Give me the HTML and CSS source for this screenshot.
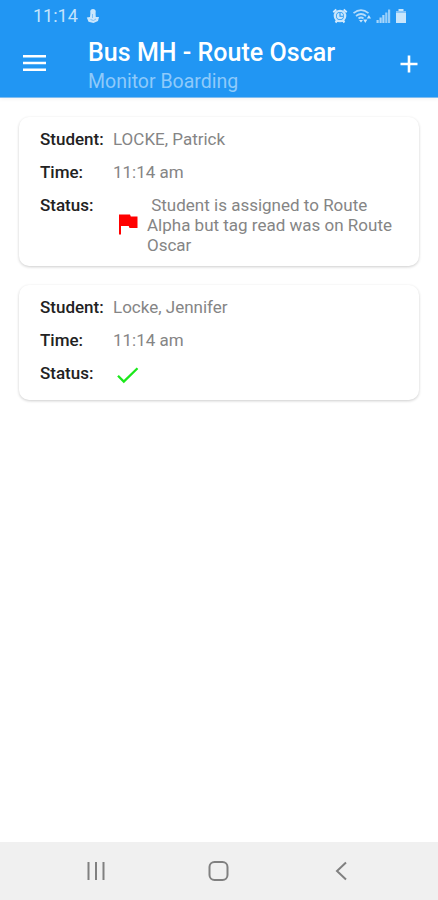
FILE: index.html
```
<!DOCTYPE html>
<html lang="en">
<head>
  <meta charset="utf-8">
  <title>Monitor Boarding</title>
  <meta name="viewport" content="width=device-width, initial-scale=1.0">
  <link rel="stylesheet" href="styles.css">
</head>
<body>
  <header class="header">
    <!-- Status bar -->
    <div class="status-bar">
      <span class="clock">11:14</span>
      <svg class="notice" width="14" height="16" viewBox="0 0 14 16">
        <circle cx="7" cy="3.6" r="2.7"/>
        <path d="M4.500 4.500h5l.3 4.500H13l-1 4-4.500 2-5-1.300L.8 9.500 4 9z"/>
        <path class="notice-cut" d="M6.500 6v4M4.500 11.500l3 1 2.500-1.500"/>
      </svg>
      <div class="status-icons">
        <svg width="16" height="16" viewBox="0 0 16 16">
          <circle cx="8" cy="8" r="6.300"/>
          <path d="M1.300 4.200l3-2.600M14.700 4.200l-3-2.600M3.500 14.500l1.800-2M12.500 14.500l-1.800-2" stroke="#d3eafd" stroke-width="2"/>
          <circle cx="8" cy="8" r="3.900" fill="#2196f3"/>
          <circle cx="8" cy="8" r="3.200"/>
          <path d="M8 5v3.200h3" fill="none" stroke="#2196f3" stroke-width="1.100"/>
        </svg>
        <svg width="20" height="16" viewBox="0 0 20 16">
          <path d="M1.500 5.200q7.500-6 15 0M4 8q5-4 10 0M6.500 10.500q2.500-2 5 0" fill="none" stroke="#b5dcfb" stroke-width="1.700"/>
          <path d="M7 12h4l-2 2.500zM11.200 11.500h4.200l-2.100 3.500zM14.800 10.500h4.200l-2.100-3.500z"/>
        </svg>
        <svg width="15" height="16" viewBox="0 0 15 16">
          <path d="M.5 12h2.200v3H.5zM3.500 9.500h2.200V15H3.500zM6.300 7h2.200v8H6.300z" opacity=".8"/>
          <path d="M9.200 4.500h2.200V15H9.200zM12 1.500h2.200V15H12z" opacity=".7"/>
        </svg>
        <svg width="12" height="16" viewBox="0 0 12 16">
          <path d="M3.500 1h5v2H11v12H1V3h2.500z"/>
          <path d="M1 3h10v2H1z" fill="#87c5f9"/>
        </svg>
      </div>
    </div>

    <!-- App bar -->
    <div class="app-bar">
      <svg class="menu" width="24" height="18" viewBox="0 0 24 18">
        <path d="M0 1h23v2.600H0zM0 7.700h23v2.600H0zM0 14.400h23V17H0z" fill="#fff"/>
      </svg>
      <div class="titles">
        <h1>Bus MH - Route Oscar</h1>
        <p>Monitor Boarding</p>
      </div>
      <svg class="add" width="18" height="18" viewBox="0 0 18 18">
        <path d="M9 .500v17M.500 9h17" stroke="#fff" stroke-width="2.600"/>
      </svg>
    </div>
  </header>

  <main class="list">
    <section class="card">
      <div class="row">
        <span class="label">Student:</span>
        <span class="value">LOCKE, Patrick</span>
      </div>
      <div class="row">
        <span class="label">Time:</span>
        <span class="value">11:14 am</span>
      </div>
      <div class="row">
        <span class="label">Status:</span>
        <div class="value status">
          <svg class="flag" width="19" height="21" viewBox="0 0 19 21">
            <path d="M0 .500h11l.8 2H18.500V14H10.500l-.800-2H2v8.500H0z" fill="#f00"/>
          </svg>
          <p class="message">&nbsp;Student is assigned to Route<br>Alpha but tag read was on Route<br>Oscar</p>
        </div>
      </div>
    </section>

    <section class="card">
      <div class="row">
        <span class="label">Student:</span>
        <span class="value">Locke, Jennifer</span>
      </div>
      <div class="row">
        <span class="label">Time:</span>
        <span class="value">11:14 am</span>
      </div>
      <div class="row">
        <span class="label">Status:</span>
        <div class="value status">
          <svg class="check" width="22" height="17" viewBox="0 0 22 17">
            <path d="M1 8.800l5.800 5.800L20.500 1.200" fill="none" stroke="#1be81b" stroke-width="2.300"/>
          </svg>
        </div>
      </div>
    </section>
  </main>

  <!-- Phone navigation -->
  <nav class="nav-bar">
    <svg width="22" height="22" viewBox="0 0 22 22">
      <path d="M3.500 2v18M11 2v18M18.500 2v18"/>
    </svg>
    <svg width="22" height="22" viewBox="0 0 22 22">
      <rect x="1.500" y="2" width="18" height="18" rx="5"/>
    </svg>
    <svg width="22" height="22" viewBox="0 0 22 22">
      <path d="M16 2.500L7 11l9 8.500"/>
    </svg>
  </nav>
</body>
</html>
```
FILE: styles.css
```
* {
  box-sizing: border-box;
}
body {
  margin: 0;
  height: 900px;
  display: flex;
  flex-direction: column;
  font-family: Roboto, "Liberation Sans", sans-serif;
  background: #fff;
}
h1, p {
  margin: 0;
}
svg {
  display: block;
  flex: none;
}

/* Header */
.header {
  height: 98px;
  background: #2196f3;
  border-bottom: 1px solid #80bdf0;
  box-shadow: 0 1px 4px rgba(0, 0, 0, 0.06);
}
.status-bar {
  display: flex;
  align-items: center;
  height: 31px;
  padding: 0 31px 0 33px;
  color: #c4e3fc;
  fill: #c9e6fc;
}
.clock {
  width: 53px;
  font-size: 18px;
}
.notice-cut {
  fill: none;
  stroke: #7fc0f7;
}
.status-icons {
  display: flex;
  align-items: center;
  gap: 4px;
  margin-left: auto;
}
.app-bar {
  display: flex;
  padding: 6px 20px 0 23px;
}
.menu {
  margin-top: 17px;
}
.titles {
  flex: 1;
  padding-top: 1px;
  margin-left: 41px;
  white-space: nowrap;
}
.titles h1 {
  font-size: 25px;
  line-height: 30px;
  font-weight: 500;
  letter-spacing: 0.03px;
  color: #fff;
}
.titles p {
  font-size: 19.5px;
  line-height: 27px;
  color: #8fcafa;
}
.add {
  margin-top: 18px;
}

/* Boarding cards */
.list {
  flex: 1;
  display: flex;
  flex-direction: column;
  gap: 19px;
  padding: 19px 19px 0;
}
.card {
  display: flex;
  flex-direction: column;
  gap: 13px;
  padding: 12px 20px 11px 21px;
  border-radius: 10px;
  background: #fff;
  box-shadow: 0 1px 3px rgba(0, 0, 0, 0.2);
}
.card:last-child {
  padding-bottom: 16px;
}
.row {
  display: flex;
  font-size: 17px;
  line-height: 20px;
}
.label {
  width: 73px;
  font-weight: 500;
  color: #222;
}
.value {
  color: #858585;
}
.status {
  display: flex;
}
.flag {
  margin: 19px 9px 0 6px;
}
.message {
  white-space: nowrap;
}
.check {
  margin: 4px 0 0 4px;
}

/* Navigation bar */
.nav-bar {
  display: flex;
  justify-content: space-between;
  height: 58px;
  padding: 18px 86px 0 85px;
  background: #f0f0f0;
  fill: none;
  stroke: #808080;
  stroke-width: 2;
}
```
